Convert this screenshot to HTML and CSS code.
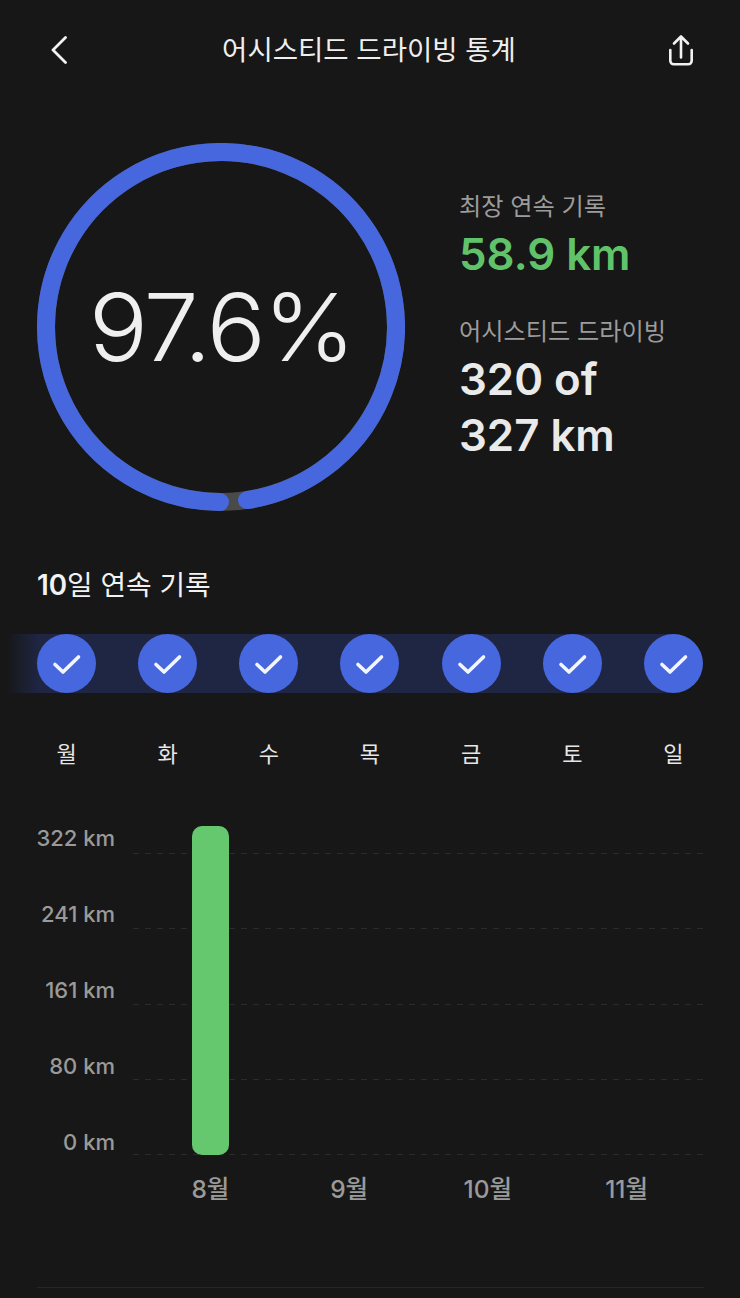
FILE: index.html
```html
<!DOCTYPE html>
<html lang="ko">
<head>
<meta charset="utf-8">
<title>어시스티드 드라이빙 통계</title>
<link rel="stylesheet" href="styles.css">
</head>
<body>
<main class="page">
  <header class="topbar">
    <svg class="icon-back" viewBox="0 0 16 28" width="16" height="28" aria-hidden="true"><path d="M14.500 1.500 2 14l12.500 12.500"/></svg>
    <h1 class="title">어시스티드 드라이빙 통계</h1>
    <svg class="icon-share" viewBox="0 0 26 32" width="26" height="32" aria-hidden="true"><path d="M13 23.500V2.500M6 9.500 13 2.500 20 9.500"/><path d="M2.300 16V26.800a3.500 3.500 0 0 0 3.500 3.500H20.200a3.500 3.500 0 0 0 3.500-3.500V16"/></svg>
  </header>

  <section class="hero">
    <div class="ring">
      <svg class="ring-svg" viewBox="0 0 368 368" width="368" height="368" aria-hidden="true">
        <circle class="ring-track" cx="184" cy="184" r="175"/>
        <path class="ring-value" d="M210 357.060A175 175 0 1 0 183 359"/>
      </svg>
      <div class="ring-label"><span class="ring-number">97.6%</span></div>
    </div>
    <div class="stats">
      <div class="stat stat-first">
        <div class="stat-label">최장 연속 기록</div>
        <div class="stat-value stat-green">58.9 km</div>
      </div>
      <div class="stat">
        <div class="stat-label">어시스티드 드라이빙</div>
        <div class="stat-value">320 of<br>327 km</div>
      </div>
    </div>
  </section>

  <h2 class="streak-title"><span class="streak-num">10</span>일 연속 기록</h2>

  <div class="streak">
    <span class="check"><svg viewBox="0 0 59 59" width="59" height="59" aria-hidden="true"><path d="M18 30.500 26 38 41.500 23"/></svg></span>
    <span class="check"><svg viewBox="0 0 59 59" width="59" height="59" aria-hidden="true"><path d="M18 30.500 26 38 41.500 23"/></svg></span>
    <span class="check"><svg viewBox="0 0 59 59" width="59" height="59" aria-hidden="true"><path d="M18 30.500 26 38 41.500 23"/></svg></span>
    <span class="check"><svg viewBox="0 0 59 59" width="59" height="59" aria-hidden="true"><path d="M18 30.500 26 38 41.500 23"/></svg></span>
    <span class="check"><svg viewBox="0 0 59 59" width="59" height="59" aria-hidden="true"><path d="M18 30.500 26 38 41.500 23"/></svg></span>
    <span class="check"><svg viewBox="0 0 59 59" width="59" height="59" aria-hidden="true"><path d="M18 30.500 26 38 41.500 23"/></svg></span>
    <span class="check"><svg viewBox="0 0 59 59" width="59" height="59" aria-hidden="true"><path d="M18 30.500 26 38 41.500 23"/></svg></span>
  </div>

  <div class="days">
    <span>월</span><span>화</span><span>수</span><span>목</span><span>금</span><span>토</span><span>일</span>
  </div>

  <section class="chart">
    <div class="y-axis">
      <span>322 km</span><span>241 km</span><span>161 km</span><span>80 km</span><span>0 km</span>
    </div>
    <div class="plot">
      <div class="gridlines"><i></i><i></i><i></i><i></i><i></i></div>
      <div class="bars"><div class="bar"></div></div>
    </div>
    <div class="months">
      <span>8월</span><span>9월</span><span>10월</span><span>11월</span>
    </div>
  </section>

  <div class="divider"></div>
</main>
</body>
</html>
```

FILE: styles.css
```css
* { box-sizing: border-box; }
html, body { margin: 0; background: #171717; }
body {
  color: #f0f0f0;
  font-family: Inter, "Noto Sans CJK KR", sans-serif;
}
.page { width: 740px; height: 1298px; overflow: hidden; }

.topbar {
  height: 100px;
  padding: 0 46px 0 51px;
  display: flex;
  align-items: center;
  justify-content: space-between;
}
.icon-back, .icon-share { fill: none; stroke: #f2f2f2; stroke-linecap: round; stroke-linejoin: round; }
.icon-back { stroke-width: 2.8; }
.icon-share { stroke-width: 2.6; }
.title {
  margin: 0 0 0 3px;
  font-size: 27.500px;
  font-weight: 400;
  line-height: 40px;
  color: #efefef;
}

.hero {
  margin-top: 43px;
  padding-left: 37px;
  height: 368px;
  display: flex;
}
.ring { display: grid; width: 368px; height: 368px; }
.ring-svg, .ring-label { grid-area: 1 / 1; }
.ring-track { fill: none; stroke: #4a4a4a; stroke-width: 18; }
.ring-value { fill: none; stroke: #4767de; stroke-width: 18; stroke-linecap: round; }
.ring-label {
  display: flex;
  align-items: center;
  justify-content: center;
}
.ring-number {
  display: block;
  font-size: 94px;
  font-weight: 270;
  letter-spacing: -2.500px;
  color: #efefef;
  transform: scaleX(1.05);
}

.stats { margin-left: 54px; padding-top: 46px; }
.stat { margin-top: 31px; }
.stat-first { margin-top: 0; }
.stat-label {
  font-size: 24.200px;
  line-height: 36px;
  color: #9c9c9c;
}
.stat-value {
  margin-top: 2px;
  font-size: 43.800px;
  font-weight: 600;
  line-height: 56px;
  color: #eaeaea;
}
.stat-green { color: #60c36a; }

.streak-title {
  margin: 53px 0 0 37px;
  font-size: 27.800px;
  font-weight: 400;
  line-height: 42px;
  color: #f2f2f2;
}
.streak-num { font-weight: 600; }

.streak {
  margin-top: 28px;
  padding: 0 37px;
  height: 59px;
  display: flex;
  justify-content: space-between;
  background-image: linear-gradient(90deg, rgba(31, 38, 68, 0) 6px, #1f2644 40px);
  background-size: 674px 100%;
  background-repeat: no-repeat;
}
.check {
  width: 59px;
  height: 59px;
  border-radius: 50%;
  background: #4767de;
}
.check svg { display: block; fill: none; stroke: #f4f6ff; stroke-width: 3.6; stroke-linecap: round; stroke-linejoin: round; }

.days {
  margin-top: 44px;
  padding: 0 37px;
  display: flex;
  justify-content: space-between;
}
.days span {
  width: 59px;
  text-align: center;
  font-size: 22px;
  line-height: 34px;
  color: #e6e6e6;
}

.chart {
  margin-top: 55px;
  padding-right: 36px;
  display: grid;
  grid-template-columns: 115px 1fr;
  column-gap: 18px;
}
.y-axis {
  height: 329px;
  display: flex;
  flex-direction: column;
  align-items: flex-end;
  font-size: 22px;
  font-weight: 500;
  color: #9a9a9a;
}
.y-axis span { flex: none; height: 76px; line-height: 24px; }
.plot { display: grid; height: 329px; }
.gridlines, .bars { grid-area: 1 / 1; }
.gridlines { padding-top: 27px; }
.gridlines i {
  display: block;
  height: 75.250px;
  background-image: repeating-linear-gradient(90deg, #2b2b2b 0 6px, transparent 6px 12px);
  background-size: 100% 1px;
  background-repeat: no-repeat;
}
.bars {
  padding: 0 8px;
  display: grid;
  grid-template-columns: repeat(4, 1fr);
  justify-items: center;
}
.bar {
  width: 37px;
  height: 329px;
  border-radius: 10px;
  background: #66c86e;
}
.months {
  grid-column: 2;
  margin-top: 16px;
  padding: 0 8px;
  display: grid;
  grid-template-columns: repeat(4, 1fr);
  justify-items: center;
  font-size: 24.500px;
  font-weight: 500;
  line-height: 36px;
  color: #9a9a9a;
}

.divider {
  margin: 80px 36px 0 37px;
  height: 1px;
  background: #262626;
}
```
